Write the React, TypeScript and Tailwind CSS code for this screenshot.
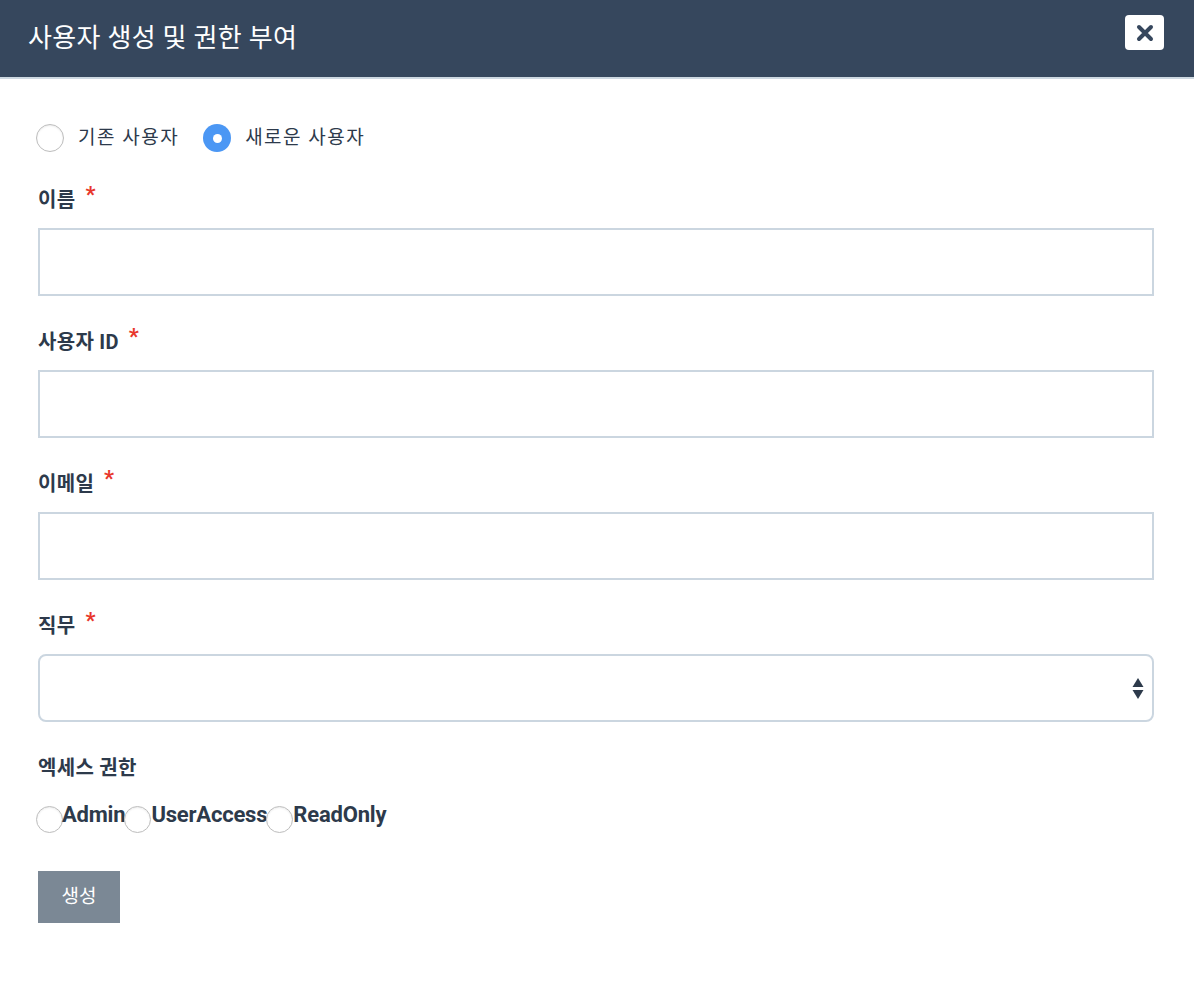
const font = { fontFamily: "Roboto, 'Noto Sans CJK KR', sans-serif" };

function Required() {
  return <span className="ml-[10px] -mt-[10px] text-[22px] font-bold leading-none text-[#e8372c]">*</span>;
}

function FieldLabel({ text, required = true }: { text: string; required?: boolean }) {
  return (
    <div className="mt-[34px] flex h-[24px] items-center text-[20px] font-bold tracking-[0.3px] text-[#2d3a4b]">
      <span>{text}</span>
      {required && <Required />}
    </div>
  );
}

function TextInput() {
  return <input className="mt-4 block h-[68px] w-full border-2 border-[#cbd6e0] bg-white px-3 outline-none" />;
}

function Radio({ checked = false, size = "h-[28px] w-[28px]" }: { checked?: boolean; size?: string }) {
  if (checked) {
    return (
      <span className={`flex ${size} shrink-0 items-center justify-center rounded-full bg-[#4b97f4]`}>
        <span className="h-[9px] w-[9px] rounded-full bg-white" />
      </span>
    );
  }
  return (
    <span
      className={`block ${size} shrink-0 rounded-full border border-[#bdbdbd] bg-white shadow-[inset_0_1px_2px_rgba(0,0,0,0.08)]`}
    />
  );
}

export default function App() {
  return (
    <div style={font} className="min-h-screen w-[1194px] bg-white">
      <div className="flex h-[79px] items-start justify-between border-b-2 border-[#cdd8e1] bg-[#36475d] pl-[28px] pr-[30px]">
        <h1 className="mt-[19px] text-[26px] font-normal leading-[38px] tracking-[0.3px] text-white">
          사용자 생성 및 권한 부여
        </h1>
        <button className="mt-[15px] flex h-[35px] w-[39px] items-center justify-center rounded bg-white">
          <svg width="18" height="18" viewBox="0 0 18 18">
            <path d="M3 3 L15 15 M15 3 L3 15" stroke="#36475d" strokeWidth="4" strokeLinecap="round" />
          </svg>
        </button>
      </div>

      <div className="pl-[38px] pr-[40px] pt-[45px]">
        <div className="-ml-[2px] flex h-[28px] items-center text-[19px] tracking-[1.5px] text-[#2d3a4b]">
          <label className="flex items-center">
            <Radio />
            <span className="ml-[14px]">기존 사용자</span>
          </label>
          <label className="ml-[24px] flex items-center">
            <Radio checked />
            <span className="ml-[14px]">새로운 사용자</span>
          </label>
        </div>

        <div className="h-[2px]" />
        <FieldLabel text="이름" />
        <TextInput />

        <FieldLabel text="사용자 ID" />
        <TextInput />

        <FieldLabel text="이메일" />
        <TextInput />

        <FieldLabel text="직무" />
        <div className="relative mt-4 h-[68px] w-full rounded-lg border-2 border-[#cbd6e0] bg-white">
          <svg className="absolute right-[8px] top-[21px]" width="12" height="24" viewBox="0 0 12 24">
            <path d="M6 1 L11.5 10 L0.5 10 Z" fill="#2d3a4b" />
            <path d="M0.5 13 L11.5 13 L6 22 Z" fill="#2d3a4b" />
          </svg>
        </div>

        <FieldLabel text="엑세스 권한" required={false} />
        <div className="-ml-[2px] mt-[26px] flex items-start text-[22px] font-bold leading-[18px] tracking-[-0.2px] text-[#2d3a4b]">
          <Radio size="h-[27px] w-[27px]" />
          <span className="-ml-[1px]">Admin</span>
          <span className="-ml-[1px]">
            <Radio size="h-[27px] w-[27px]" />
          </span>
          <span>UserAccess</span>
          <span className="-ml-[1px]">
            <Radio size="h-[27px] w-[27px]" />
          </span>
          <span>ReadOnly</span>
        </div>

        <button className="mt-[38px] h-[52px] w-[82px] bg-[#7b8895] text-[19px] text-white">생성</button>
      </div>
    </div>
  );
}
